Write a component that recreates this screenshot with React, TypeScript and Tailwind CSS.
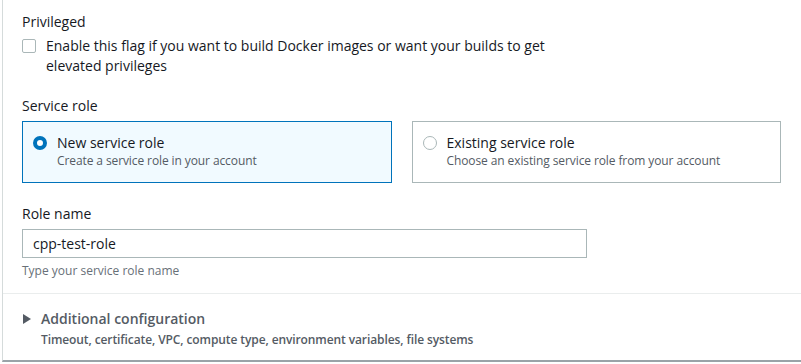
import React, { useState } from 'react';

const font = { fontFamily: '"Open Sans", "Noto Sans", sans-serif' };

const RoleCard: React.FC<{
  title: string;
  desc: string;
  selected: boolean;
  onClick: () => void;
}> = ({ title, desc, selected, onClick }) => (
  <div
    onClick={onClick}
    className={`flex h-[62px] cursor-pointer items-start gap-[10px] px-[10px] pt-[11px] ${
      selected ? 'border border-[#0073bb] bg-[#f1faff]' : 'border border-[#aab7b8] bg-white'
    }`}
  >
    <div className="flex h-[20px] w-[14px] items-center justify-center">
      {selected ? (
        <div className="h-[14px] w-[14px] rounded-full border-[4px] border-[#0073bb] bg-white" />
      ) : (
        <div className="h-[14px] w-[14px] rounded-full border border-[#aab7b8] bg-white" />
      )}
    </div>
    <div className="flex flex-col">
      <span className="text-[14px] leading-[20px] text-[#16191f]">{title}</span>
      <span className="text-[12px] leading-[16px] tracking-[-0.1px] text-[#545b64]">{desc}</span>
    </div>
  </div>
);

const App: React.FC = () => {
  const [role, setRole] = useState<'new' | 'existing'>('new');
  const [name, setName] = useState('cpp-test-role');

  return (
    <div className="h-[364px] w-[801px] bg-white" style={font}>
      <div className="ml-[2px] flex h-[362px] flex-col border-b-2 border-l border-b-[#9aa3a8] border-l-[#d5dbdb]">
        <div className="pl-[19px] pr-[20px] pt-[12px]">
          <div className="text-[14px] leading-[20px] text-[#16191f]">Privileged</div>
          <label className="mt-[4px] flex items-start gap-[10px]">
            <div className="mt-[3px] h-[14px] w-[14px] rounded-[2px] border border-[#aab7b8] bg-white" />
            <span className="w-[510px] text-[14px] leading-[20px] text-[#16191f]">
              Enable this flag if you want to build Docker images or want your builds to get elevated privileges
            </span>
          </label>

          <div className="mt-[20px] text-[14px] leading-[20px] text-[#16191f]">Service role</div>
          <div className="mt-[5px] grid grid-cols-2 gap-[20px]">
            <RoleCard
              title="New service role"
              desc="Create a service role in your account"
              selected={role === 'new'}
              onClick={() => setRole('new')}
            />
            <RoleCard
              title="Existing service role"
              desc="Choose an existing service role from your account"
              selected={role === 'existing'}
              onClick={() => setRole('existing')}
            />
          </div>

          <div className="mt-[21px] text-[14px] leading-[20px] text-[#16191f]">Role name</div>
          <input
            value={name}
            onChange={(e) => setName(e.target.value)}
            className="mt-[5px] h-[29px] w-[565px] border border-[#aab7b8] px-[10px] text-[14px] text-[#16191f] outline-none"
          />
          <div className="mt-[5px] text-[12px] leading-[16px] text-[#687078]">Type your service role name</div>
        </div>

        <div className="mt-[14px] border-t border-[#eaeded]" />

        <div className="flex items-start gap-[10px] pl-[19px] pr-[20px] pt-[15px]">
          <svg width="9" height="20" viewBox="0 0 9 20" className="shrink-0">
            <polygon points="1,5 9,10 1,15" fill="#545b64" />
          </svg>
          <div className="flex flex-col">
            <span className="text-[14px] font-semibold leading-[20px] text-[#545b64]">Additional configuration</span>
            <span className="mt-[3px] text-[12px] font-semibold leading-[16px] tracking-[-0.1px] text-[#545b64]">
              Timeout, certificate, VPC, compute type, environment variables, file systems
            </span>
          </div>
        </div>
      </div>
    </div>
  );
};

export default App;
